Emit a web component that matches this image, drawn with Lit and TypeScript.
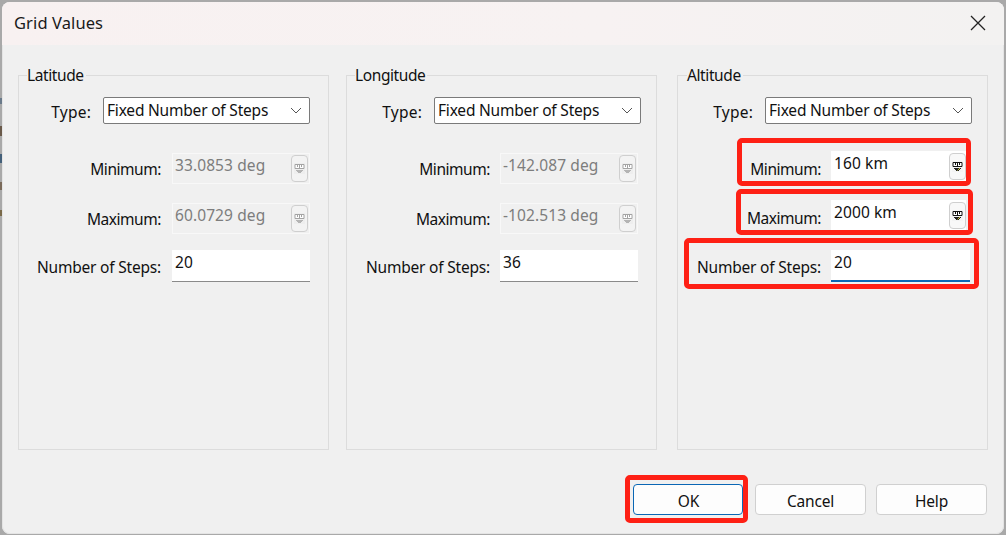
import { LitElement, html, css, svg } from "lit";
import { customElement } from "lit/decorators.js";

const rulerIcon = (disabled: boolean) => {
  const ink = disabled ? "#a4a4a4" : "#111";
  return html`<svg class="ruler" width="11" height="11" viewBox="0 0 11 11" aria-hidden="true">
  ${svg`<rect x="0" y="0" width="11" height="11" fill=${disabled ? "#eeeeee" : "#f4f4f4"}/>
  <path d="M1 1.5h9M1 1.5v4h9v-4" fill="#fff" stroke=${ink} stroke-width="1"/>
  <path d="M3.5 2v2M5.5 2v3M7.5 2v2" stroke=${ink} stroke-width="1"/>
  <path d="M2 7h7v1H8v1H7v1H4V9H3V8H2z" fill=${disabled ? "#b4b4b4" : "#222"}/>
  ${disabled ? "" : svg`<path d="M5.5 9.5l2.5-2.5" fill="none" stroke="#c9c23a" stroke-width="1"/>`}`}
</svg>`;
};

const chevron = html`<svg class="chev" width="12" height="7" viewBox="0 0 12 7" aria-hidden="true"><path d="M1 1l5 5 5-5" fill="none" stroke="#555" stroke-width="1"/></svg>`;

interface Axis { name: string; cls: string; min: string; max: string; steps: string; }
const axes: Axis[] = [
  { name: "Latitude", cls: "lat", min: "33.0853 deg", max: "60.0729 deg", steps: "20" },
  { name: "Longitude", cls: "lon", min: "-142.087 deg", max: "-102.513 deg", steps: "36" },
  { name: "Altitude", cls: "alt", min: "160 km", max: "2000 km", steps: "20" },
];

@customElement("app-root")
export class AppRoot extends LitElement {
  static styles = css`
    :host {
      display: block;
      position: relative;
      width: 1006px;
      height: 535px;
      overflow: hidden;
      box-sizing: border-box;
      padding: 2px 2px 1px 2px;
      background:
        linear-gradient(#6a5a4a, #6a5a4a) 0 126px / 2px 10px no-repeat,
        linear-gradient(#44607a, #44607a) 0 154px / 2px 9px no-repeat,
        linear-gradient(#7a6a5a, #7a6a5a) 0 182px / 2px 8px no-repeat,
        linear-gradient(#7a6a4a, #7a6a4a) 0 210px / 2px 6px no-repeat,
        linear-gradient(#6a7a8a, #6a7a8a) 0 98px / 2px 6px no-repeat,
        #a9a9a9;
      font-family: "Noto Sans", "Open Sans", sans-serif;
      font-size: 15.5px;
      letter-spacing: -0.2px;
      color: #111;
    }
    .dialog {
      width: 1002px;
      height: 532px;
      box-sizing: border-box;
      background: #f0f0f0;
      border-radius: 8px;
      display: flex;
      flex-direction: column;
      overflow: hidden;
      box-shadow: inset 0 0 0 1px #e4e4e4;
    }
    .title {
      height: 43px;
      flex: none;
      display: flex;
      align-items: center;
      justify-content: space-between;
      padding: 0 18px 2px 12px;
      box-sizing: border-box;
      background: linear-gradient(90deg, #f8f1f1 0%, #f7f2f2 60%, #f3f2f1 100%);
      font-size: 16.5px;
      letter-spacing: 0.1px;
      color: #1a1a1a;
    }
    .close { display: block; }
    .panels {
      display: flex;
      padding: 20px 0 0 16px;
      flex: none;
    }
    fieldset {
      width: 311px;
      height: 385px;
      box-sizing: border-box;
      margin: 0;
      padding: 12px 18px 0 0;
      border: 1px solid #dcdcdc;
      min-width: 0;
    }
    fieldset.lon { margin-left: 17px; }
    fieldset.alt { margin-left: 20px; }
    legend {
      margin-left: 8px;
      padding: 0 2px 0 0;
      line-height: 20px;
      letter-spacing: -0.4px;
      background: #f0f0f0;
    }
    .alt legend { margin-left: 9px; }
    .type-row {
      display: grid;
      grid-template-columns: 72px 207px;
      column-gap: 12px;
      height: 27px;
      align-items: center;
    }
    .lon .type-row, .alt .type-row { grid-template-columns: 75px 207px; }
    .lbl { text-align: right; white-space: nowrap; }
    .type-row .lbl { padding-top: 2px; letter-spacing: 0.2px; }
    .select {
      height: 27px;
      box-sizing: border-box;
      background: #fff;
      border: 1px solid #7a7a7a;
      border-radius: 2px;
      display: flex;
      align-items: center;
      justify-content: space-between;
      padding: 0 7px 1px 3px;
    }
    .rows { display: flex; flex-direction: column; margin-top: 29px; }
    .alt .rows { margin-top: 27px; }
    .row {
      display: grid;
      grid-template-columns: 142px 138px;
      column-gap: 11px;
      align-items: center;
    }
    .lon .row { grid-template-columns: 143px 138px; column-gap: 10px; }
    .alt .row { grid-template-columns: 143px 139px; column-gap: 10px; }
    .row .lbl { padding-top: 1px; }
    .min-row .lbl, .max-row .lbl { letter-spacing: -0.45px; }
    .min-row { height: 31px; }
    .max-row { height: 31px; margin-top: 19px; }
    .alt .min-row, .alt .max-row { height: 30px; }
    .step-row { height: 32px; margin-top: 16px; }
    .alt .step-row { margin-top: 20px; }
    .alt .min-row .lbl, .alt .max-row .lbl { padding-top: 5px; }
    .field {
      height: 100%;
      box-sizing: border-box;
      padding: 0 3px;
      display: flex;
      align-items: flex-start;
      justify-content: space-between;
      line-height: 22px;
    }
    .field.disabled {
      background: #f0f0f0;
      box-shadow: inset 0 0 0 1px #f8f8f8;
      color: #7d7d7d;
      padding: 1px 2px 0 3px;
    }
    .field.unit { background: #fff; padding: 1px 0 0 3px; }
    .alt .field.unit { margin-right: 4px; }
    .field.entry {
      background: #fff;
      border-bottom: 1px solid #8a8a8a;
      padding-top: 1px;
    }
    .alt .field.entry { border-bottom: 2px solid #0a67b5; }
    .val { display: block; letter-spacing: 0.1px; }
    .pick {
      width: 17px;
      height: 27px;
      box-sizing: border-box;
      margin-top: 1px;
      border: 1px solid #cfcfcf;
      border-radius: 4px;
      background: #f8f8f8;
      display: flex;
      align-items: center;
      justify-content: center;
    }
    .disabled .pick { background: #f3f3f3; }
    .ruler { display: block; }
    .footer {
      display: flex;
      justify-content: flex-end;
      column-gap: 10px;
      padding: 34px 17px 0 0;
    }
    .btn {
      width: 111px;
      height: 31px;
      box-sizing: border-box;
      background: #fdfdfd;
      border: 1px solid #d0d0d0;
      border-radius: 4px;
      font: inherit;
      letter-spacing: inherit;
      color: #111;
      padding: 2px 0 0;
    }
    .btn.primary { width: 110px; border-color: #0a67b5; margin-right: 2px; padding-left: 1px; }
    .mark {
      position: absolute;
      box-sizing: border-box;
      border: 5px solid #fe2015;
      border-radius: 5px;
      pointer-events: none;
    }
    .m1 { left: 737px; top: 138px; width: 234px; height: 48px; }
    .m2 { left: 736px; top: 189px; width: 237px; height: 46px; }
    .m3 { left: 684px; top: 238px; width: 295px; height: 51px; }
    .m4 { left: 625px; top: 475px; width: 123px; height: 48px; }
  `;

  private axis(a: Axis) {
    const dis = a.cls !== "alt";
    const cls = dis ? "field disabled" : "field unit";
    return html`<fieldset class=${a.cls}>
      <legend>${a.name}</legend>
      <div class="type-row">
        <span class="lbl">Type:</span>
        <div class="select"><span>Fixed Number of Steps</span>${chevron}</div>
      </div>
      <div class="rows">
        <div class="row min-row"><span class="lbl">Minimum:</span>
          <div class=${cls}><span class="val">${a.min}</span><span class="pick">${rulerIcon(dis)}</span></div></div>
        <div class="row max-row"><span class="lbl">Maximum:</span>
          <div class=${cls}><span class="val">${a.max}</span><span class="pick">${rulerIcon(dis)}</span></div></div>
        <div class="row step-row"><span class="lbl">Number of Steps:</span>
          <div class="field entry"><span class="val">${a.steps}</span></div></div>
      </div>
    </fieldset>`;
  }

  render() {
    return html`<div class="dialog">
        <div class="title">
          <span>Grid Values</span>
          <svg class="close" width="16" height="16" viewBox="0 0 16 16" aria-label="Close"><path d="M1 1l14 14M15 1L1 15" stroke="#222" stroke-width="1.3" fill="none"/></svg>
        </div>
        <div class="panels">${axes.map((a) => this.axis(a))}</div>
        <div class="footer">
          <button class="btn primary">OK</button>
          <button class="btn">Cancel</button>
          <button class="btn">Help</button>
        </div>
      </div>
      <div class="mark m1"></div>
      <div class="mark m2"></div>
      <div class="mark m3"></div>
      <div class="mark m4"></div>`;
  }
}
